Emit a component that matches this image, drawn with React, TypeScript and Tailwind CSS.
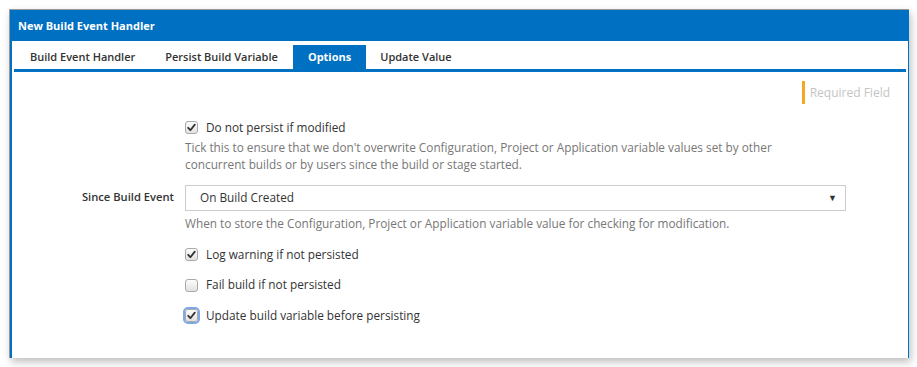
import React from "react";

function Check({ checked, focused }: { checked?: boolean; focused?: boolean }) {
  return (
    <span
      className={`relative inline-flex h-[13px] w-[13px] shrink-0 items-center justify-center rounded-[3px] border border-[#a9a9a9] bg-gradient-to-b from-[#fcfcfc] to-[#e2e2e2] ${
        focused ? "outline outline-2 outline-[#7fa8e8]" : ""
      }`}
    >
      {checked && (
        <svg width="9" height="9" viewBox="0 0 9 9">
          <path d="M1.2 4.8 L3.4 7.2 L7.8 1.6" fill="none" stroke="#333" strokeWidth="1.8" strokeLinecap="round" strokeLinejoin="round" />
        </svg>
      )}
    </span>
  );
}

function CheckRow({ label, checked, focused }: { label: string; checked?: boolean; focused?: boolean }) {
  return (
    <div className="flex items-center gap-[8px]">
      <Check checked={checked} focused={focused} />
      <span className="text-[11.8px] text-[#333]">{label}</span>
    </div>
  );
}

export default function App() {
  return (
    <div
      className="h-[367px] w-[917px] bg-white pl-[9px] pt-[9px]"
      style={{ fontFamily: '"Open Sans", "Noto Sans", sans-serif' }}
    >
      <div className="flex h-[349px] w-[900px] flex-col border-l border-t border-[#9a9a9a] bg-white shadow-[2px_4px_8px_rgba(0,0,0,0.25)]">
        <div className="flex h-[31px] items-center bg-[#0070c2] pl-[8px] pt-[1px] text-[11px] font-bold text-white">
          New Build Event Handler
        </div>
        <div className="flex flex-1 flex-col border-l-2 border-r border-[#0070c2]">
          <div className="mx-[2px] mt-[3px] flex h-[28px] items-end border-b-[3px] border-[#0070c2] pl-[1px] text-[11px] font-semibold text-[#333]">
            <div className="flex h-[24px] items-center px-[15px] pt-[1px]">Build Event Handler</div>
            <div className="flex h-[24px] items-center px-[15px] pt-[1px]">Persist Build Variable</div>
            <div className="flex h-[24px] items-center bg-[#0070c2] px-[15px] pt-[1px] font-bold text-white">Options</div>
            <div className="flex h-[24px] items-center px-[14px] pt-[1px]">Update Value</div>
          </div>
          <div className="flex justify-end pr-[18px] pt-[9px]">
            <div className="flex h-[23px] items-center border-l-[3px] border-[#f5a623] pl-[5px] pt-[1px] text-[12px] text-[#c4c4c4]">
              Required Field
            </div>
          </div>
          <div className="grid grid-cols-[162px_661px] gap-x-[11px] pt-[15px] text-[11.8px]">
            <div />
            <div>
              <CheckRow label="Do not persist if modified" checked />
              <p className="mt-[2px] max-w-[600px] leading-[17px] text-[#777]">
                Tick this to ensure that we don't overwrite Configuration, Project or Application variable values set by other concurrent builds or by users since the build or stage started.
              </p>
            </div>
            <div className="mt-[12px] flex h-[26px] items-center justify-end text-[11.2px] font-semibold text-[#333]">Since Build Event</div>
            <div className="mt-[12px]">
              <div className="flex h-[26px] items-center justify-between border border-[#ccc] bg-white pl-[14px] pr-[8px] text-[#333]">
                <span>On Build Created</span>
                <span className="text-[9px] text-[#333]">▼</span>
              </div>
              <p className="mt-[4px] leading-[17px] text-[#777]">
                When to store the Configuration, Project or Application variable value for checking for modification.
              </p>
            </div>
            <div />
            <div className="mt-[14px] flex flex-col gap-[13px]">
              <CheckRow label="Log warning if not persisted" checked />
              <CheckRow label="Fail build if not persisted" />
              <CheckRow label="Update build variable before persisting" checked focused />
            </div>
          </div>
        </div>
      </div>
    </div>
  );
}
